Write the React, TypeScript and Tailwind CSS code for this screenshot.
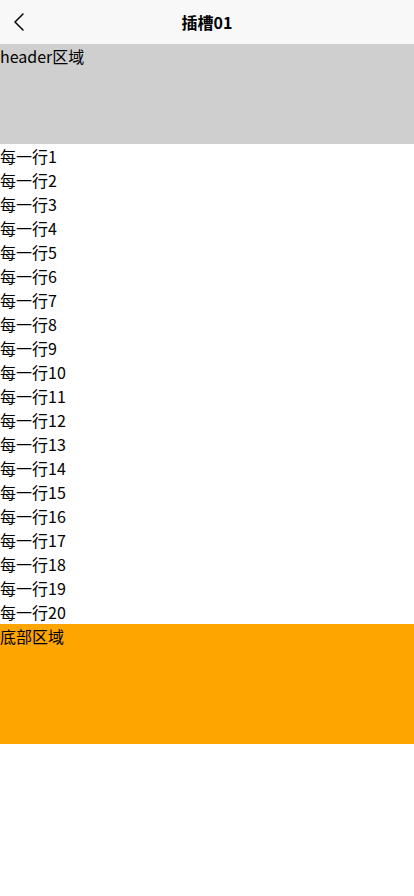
import React from "react";

export default function App() {
  const rows = Array.from({ length: 20 }, (_, i) => i + 1);
  return (
    <div className="w-[414px] min-h-[896px] bg-white text-black" style={{ fontFamily: '"Noto Sans CJK SC", "Noto Sans", sans-serif' }}>
      <div className="relative h-[44px] bg-[#f8f8f8] flex items-center justify-center">
        <div className="absolute left-[10px] top-[12px] w-[20px] h-[20px]">
          <svg width="20" height="20" viewBox="0 0 20 20" fill="none">
            <path d="M13 2 L5 10 L13 18" stroke="#000" strokeWidth="1.5" strokeLinecap="round" strokeLinejoin="round" />
          </svg>
        </div>
        <span className="text-[16px] font-bold leading-[44px]">插槽01</span>
      </div>
      <div className="h-[100px] bg-[#cfcfcf] text-[16px] leading-[24px]">header区域</div>
      <div>
        {rows.map((n) => (
          <div key={n} className="h-[24px] text-[16px] leading-[24px]">每一行{n}</div>
        ))}
      </div>
      <div className="h-[120px] bg-[#ffa500] text-[16px] leading-[24px]">底部区域</div>
    </div>
  );
}
